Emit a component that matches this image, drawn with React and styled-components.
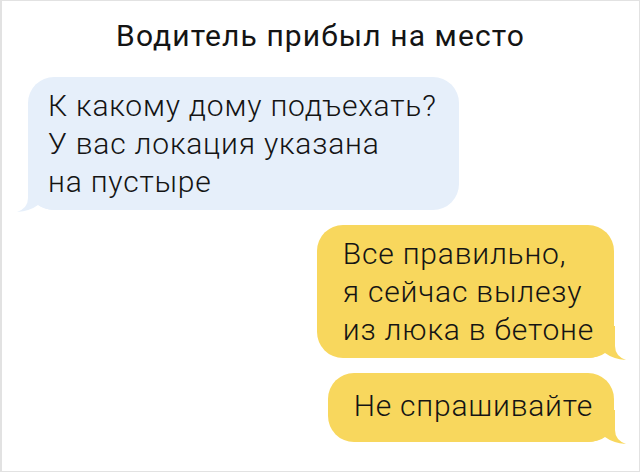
import React from "react";
import styled, { createGlobalStyle } from "styled-components";

const Global = createGlobalStyle`
  html, body {
    margin: 0;
    padding: 0;
    background: #ffffff;
  }
`;

const Frame = styled.div`
  box-sizing: border-box;
  width: 640px;
  height: 472px;
  border: 1px solid #e2e2e2;
  border-left: 2px solid #e2e2e2;
  background: #ffffff;
  font-family: Roboto, "Noto Sans", sans-serif;
  color: #141414;
  overflow: hidden;
`;

const Title = styled.h1`
  margin: 0;
  padding-top: 17px;
  font-size: 30px;
  font-weight: 400;
  letter-spacing: 1.1px;
  line-height: 36px;
  text-align: center;
`;

const Thread = styled.div`
  display: flex;
  flex-direction: column;
  gap: 15px;
  padding: 23px 25px 0 26px;
`;

const Bubble = styled.div`
  position: relative;
  align-self: ${(p) => (p.$mine ? "flex-end" : "flex-start")};
  padding: ${(p) => p.$pad};
  border-radius: 26px;
  background: ${(p) => (p.$mine ? "#f8d75d" : "#e6effa")};
  font-family: "Roboto Light", Roboto, sans-serif;
  font-size: 30px;
  font-weight: 300;
  letter-spacing: 0.8px;
  line-height: 38px;
  white-space: nowrap;
`;

const Text = styled.span`
  position: relative;
`;

const Tail = styled.svg`
  position: absolute;
  bottom: 0;
  ${(p) => (p.$mine ? "right: -12px;" : "left: -11px;")}
  width: 44px;
  height: 34px;
  overflow: visible;
  transform: ${(p) => (p.$mine ? "scaleX(-1)" : "none")};
  fill: ${(p) => (p.$mine ? "#f8d75d" : "#e6effa")};
`;

function BubbleTail({ mine }) {
  return (
    <Tail $mine={mine} viewBox="0 0 44 34">
      <path d="M11 2 L11 22 Q11 32 0 36 Q13 35 21 29 Q27 34 41 34 L41 2 Z" />
    </Tail>
  );
}

export default function App() {
  return (
    <Frame>
      <Global />
      <Title>Водитель прибыл на место</Title>
      <Thread>
        <Bubble $pad="10px 22px 9px 20px">
          <BubbleTail />
          <Text>
            К какому дому подъехать?
            <br />
            У вас локация указана
            <br />
            на пустыре
          </Text>
        </Bubble>
        <Bubble $mine $pad="10px 20px 9px 26px">
          <BubbleTail mine />
          <Text>
            Все правильно,
            <br />я сейчас вылезу
            <br />
            из люка в бетоне
          </Text>
        </Bubble>
        <Bubble $mine $pad="14px 21px 17px 26px">
          <BubbleTail mine />
          <Text>Не спрашивайте</Text>
        </Bubble>
      </Thread>
    </Frame>
  );
}
